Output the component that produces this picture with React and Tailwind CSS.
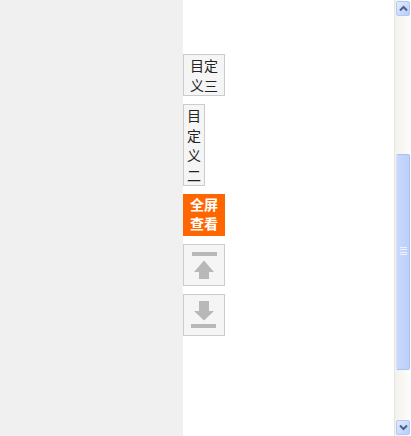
import React from "react";

const cjk = "font-['Noto_Sans_CJK_SC',sans-serif]";

function ArrowUp() {
  return (
    <svg width="40" height="40" viewBox="0 0 40 40">
      <rect x="8" y="7" width="25" height="4" fill="#b8b8b8" />
      <path d="M20 15.5 L30 27 L25 27 L25 34 L15 34 L15 27 L10 27 Z" fill="#b8b8b8" />
    </svg>
  );
}

function ArrowDown() {
  return (
    <svg width="40" height="40" viewBox="0 0 40 40">
      <path d="M15 6 L25 6 L25 16 L30 16 L20 25.5 L10 16 L15 16 Z" fill="#b8b8b8" />
      <rect x="7" y="29" width="25" height="4" fill="#b8b8b8" />
    </svg>
  );
}

function ScrollBtn({ down }) {
  return (
    <div className="h-[15px] w-[14px] ml-px my-px shrink-0 rounded-[2px] border border-[#b4c8f6] bg-gradient-to-br from-[#e3ebfe] to-[#b9cdfa] flex items-center justify-center">
      <svg width="9" height="7" viewBox="0 0 9 7">
        <path d={down ? "M1 1.5 L4.5 5 L8 1.5" : "M1 5.5 L4.5 2 L8 5.5"} fill="none" stroke="#4d6185" strokeWidth="2" />
      </svg>
    </div>
  );
}

export default function App() {
  return (
    <div className="flex w-[411px] h-[436px] overflow-hidden bg-white">
      <div className="w-[183px] bg-[#f0f0f0]"></div>
      <div className={`flex-1 pt-[54px] flex flex-col items-start gap-2 text-[14px] text-[#222] ${cjk}`}>
        <div className="w-[42px] h-[42px] border border-[#cccccc] bg-[#f5f5f5] text-center leading-[20px] flex items-center justify-center">
          <span className="w-[28px]">目定义三</span>
        </div>
        <div className="w-[22px] h-[82px] border border-[#cccccc] bg-[#f5f5f5] text-center leading-[20px]">
          <div>目</div>
          <div>定</div>
          <div>义</div>
          <div>二</div>
        </div>
        <div className="w-[42px] h-[42px] pb-[2px] bg-[#ff6600] text-white font-bold text-center leading-[19px] flex items-center justify-center">
          <span className="w-[28px]">全屏查看</span>
        </div>
        <div className="w-[42px] h-[42px] border border-[#cccccc] bg-[#f5f5f5]">
          <ArrowUp />
        </div>
        <div className="w-[42px] h-[42px] border border-[#cccccc] bg-[#f5f5f5]">
          <ArrowDown />
        </div>
      </div>
      <div className="w-[17px] flex flex-col border-l border-[#e6e6e1] bg-gradient-to-r from-[#f3f1ec] to-[#fefefb]">
        <ScrollBtn />
        <div className="h-[137px]"></div>
        <div className="h-[216px] w-[14px] ml-px shrink-0 rounded-[2px] border border-[#a9c0f3] border-l-[#d5e1fc] bg-gradient-to-r from-[#c9d9fe] to-[#bccffb] pt-[92px]">
          <div className="w-[7px] h-[8px] mx-auto flex flex-col justify-between">
            <div className="h-px bg-[#eef3fe]"></div>
            <div className="h-px bg-[#eef3fe]"></div>
            <div className="h-px bg-[#eef3fe]"></div>
            <div className="h-px bg-[#eef3fe]"></div>
          </div>
        </div>
        <div className="flex-1"></div>
        <ScrollBtn down />
      </div>
    </div>
  );
}
